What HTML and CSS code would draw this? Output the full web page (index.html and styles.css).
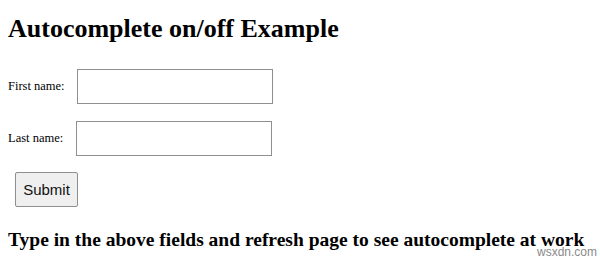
FILE: index.html
```html
<!DOCTYPE html>
<html lang="en">
<head>
    <meta charset="UTF-8">
    <title>Autocomplete on/off Example</title>
    <link rel="stylesheet" href="styles.css">
</head>
<body>
    <h1 class="title">Autocomplete on/off Example</h1>

    <form class="form" autocomplete="on">
        <div class="row">
            <label class="label" for="fname">First name:</label>
            <input class="field" type="text" id="fname" name="fname">
        </div>
        <div class="row row-last">
            <label class="label" for="lname">Last name:</label>
            <input class="field" type="text" id="lname" name="lname">
        </div>
        <button class="btn" type="submit">Submit</button>
    </form>

    <h2 class="note">Type in the above fields and refresh page to see autocomplete at work</h2>

    <span class="watermark">wsxdn.com</span>
</body>
</html>
```

FILE: styles.css
```css
body {
    margin: 0;
    padding: 0 8px;
    font-family: "Liberation Serif", "Times New Roman", serif;
    color: #000;
    background: #fff;
    width: 584px;
    height: 262px;
    overflow: hidden;
    position: relative;
}

.title {
    margin: 0;
    padding-top: 14px;
    font-size: 26px;
    line-height: 30px;
    font-weight: bold;
}

.form {
    margin-top: 25px;
}

.row {
    display: flex;
    align-items: center;
    margin-bottom: 17px;
}

.label {
    font-size: 12.5px;
    width: 69px;
}

.row-last .label {
    width: 68px;
}

.field {
    width: 196px;
    height: 35px;
    box-sizing: border-box;
    border: 1px solid #8f8f8f;
    margin: 0;
    padding: 0;
}

.row-last {
    margin-bottom: 16px;
}

.btn {
    margin-left: 7px;
    width: 63px;
    height: 35px;
    font-family: "Liberation Sans", Arial, sans-serif;
    font-size: 15px;
    background: #efefef;
    border: 1px solid #8f8f8f;
    border-radius: 2px;
    color: #111;
    padding: 0;
}

.note {
    margin: 22px 0 0;
    font-size: 19.5px;
    line-height: 22px;
    font-weight: bold;
    white-space: nowrap;
}

.watermark {
    position: absolute;
    right: 3px;
    bottom: 3px;
    font-family: "Liberation Sans", Arial, sans-serif;
    font-size: 12px;
    color: #8a8a8a;
    text-shadow: 0 0 2px #fff, 0 0 2px #fff;
}
```
